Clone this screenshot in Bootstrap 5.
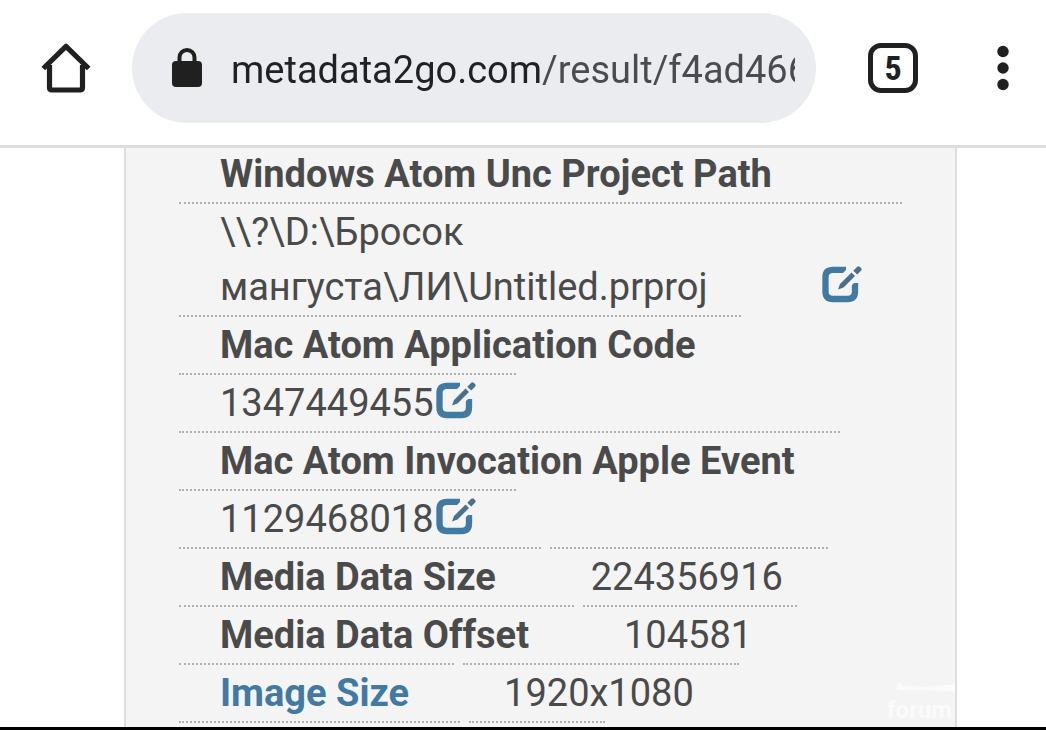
<!DOCTYPE html>
<html lang="en">
<head>
<meta charset="utf-8">
<meta name="viewport" content="width=device-width, initial-scale=1">
<title>Metadata result</title>
<link href="https://cdn.jsdelivr.net/npm/bootstrap@5.3.0/dist/css/bootstrap.min.css" rel="stylesheet">
<style>
  body { font-family: Roboto, "Liberation Sans", sans-serif; font-size: 38px; color: #4a4a4a; }
  .browser-bar { padding: 13px 32px 22px 41px; border-bottom: 3px solid #dedede; z-index: 2; }
  .browser-bar svg { display: block; }
  .address { height: 110px; background: #ebecf0; margin: 0 52px 0 41px; padding: 0 21px 0 39px; gap: 28px; }
  .address input {
    border: 0; outline: 0; padding: 4px 0 0; height: 60px; min-width: 0;
    color: transparent; background: linear-gradient(90deg, #202124 309px, #494b50 309px);
    -webkit-background-clip: text; background-clip: text;
  }
  .tab-count {
    width: 50px; height: 50px; border: 5px solid #202020; border-radius: 13px; color: #202020;
    font: bold 34px/40px "Liberation Sans Narrow", "Roboto Condensed", Roboto, sans-serif;
    margin-right: 74px;
  }
  .panel { margin: -4px 89px 0 124px; padding-left: 53px; background: #f4f4f4; border: 2px solid #dedede; border-width: 0 2px; }
  .entry { gap: 9px; }
  .cell { border-top: 2px dotted #b0b0b0; padding: 1px 45px 0 41px; line-height: 55px; min-height: 58px; }
  .path-cell { width: 723px; padding-right: 40px; }
  .number-cell { padding-right: 40px; gap: 2px; }
  .edit { margin-bottom: 12px; }
  .edit svg { display: block; }
  .next-name { width: 281px; }
  .next-value { width: 136px; }
  .accent { color: #4179a3; }
  .watermark { right: 89px; bottom: 6px; width: 70px; color: #fbfbfb; font-size: 24px; line-height: 28px; }
  .results { min-height: 0; }
  .end-strip { height: 3px; background: #000; }
</style>
</head>
<body class="bg-white">
<div class="d-flex flex-column vh-100 overflow-hidden">
  <header class="browser-bar d-flex align-items-center bg-white position-relative flex-shrink-0">
    <button type="button" class="border-0 bg-transparent p-0" aria-label="Home">
      <svg width="50" height="50" viewBox="0 0 50 50" fill="none" stroke="#202020" stroke-width="5.200" stroke-linejoin="round"><path d="M8.500 22V44.500Q8.500 47 11 47H39Q41.500 47 41.500 44.500V22"/><path d="M2.300 25.500L25 3.300L47.700 25.500"/></svg>
    </button>
    <div class="address rounded-pill d-flex align-items-center flex-grow-1">
      <svg class="flex-shrink-0" width="32" height="40" viewBox="0 0 32 40"><rect x="1" y="13" width="30" height="26" rx="4" fill="#202020"/><path d="M8.500 14V9.500a7.500 7.500 0 0 1 15 0V14" fill="none" stroke="#202020" stroke-width="4"/></svg>
      <input class="flex-grow-1" type="text" aria-label="Address" value="metadata2go.com/result/f4ad466">
    </div>
    <button type="button" class="tab-count bg-transparent p-0" aria-label="5 open tabs">5</button>
    <button type="button" class="border-0 bg-transparent p-0" aria-label="Menu">
      <svg width="22" height="48" viewBox="0 0 22 48" fill="#202020"><circle cx="11" cy="7.500" r="5.700"/><circle cx="11" cy="24" r="5.700"/><circle cx="11" cy="40.500" r="5.700"/></svg>
    </button>
  </header>

  <svg class="d-none">
    <symbol id="pencil" viewBox="0 0 40 38">
      <path d="M24 4.800H11Q3.500 4.800 3.500 12V26.500Q3.500 34 11 34H25.500Q33 34 33 26.500V18" fill="none" stroke="#4179a3" stroke-width="6.300"/>
      <path d="M31 -2L11 18V27H23L42 8V-2Z" fill="#f4f4f4"/>
      <path d="M16 24.500L18 19L29.500 7.500L33 11L21.500 22.500ZM31.300 5.700L35 2Q36.300 .5 38 2L39 3Q40.300 4.300 39 5.700L35.200 9.500Z" fill="#47718f"/>
    </symbol>
  </svg>

  <main class="results flex-grow-1 d-flex flex-column">
    <div class="panel flex-grow-1 overflow-hidden">
      <div class="entry d-flex"><div class="cell fw-bold">Windows Atom Unc Project Path</div></div>
      <div class="entry d-flex">
        <div class="cell path-cell d-flex justify-content-between align-items-end">
          <span>\\?\D:\Бросок<br>мангуста\ЛИ\Untitled.prproj</span>
          <button type="button" class="edit border-0 bg-transparent p-0" aria-label="Edit project path"><svg width="40" height="38"><use href="#pencil"/></svg></button>
        </div>
      </div>
      <div class="entry d-flex"><div class="cell fw-bold">Mac Atom Application Code</div></div>
      <div class="entry d-flex">
        <div class="cell number-cell d-flex align-items-end"><span>1347449455</span>
          <button type="button" class="edit border-0 bg-transparent p-0" aria-label="Edit application code"><svg width="40" height="38"><use href="#pencil"/></svg></button>
        </div>
      </div>
      <div class="entry d-flex"><div class="cell fw-bold">Mac Atom Invocation Apple Event</div></div>
      <div class="entry d-flex">
        <div class="cell number-cell d-flex align-items-end"><span>1129468018</span>
          <button type="button" class="edit border-0 bg-transparent p-0" aria-label="Edit invocation event"><svg width="40" height="38"><use href="#pencil"/></svg></button>
        </div>
      </div>
      <div class="entry d-flex"><div class="cell fw-bold">Media Data Size</div><div class="cell">224356916</div></div>
      <div class="entry d-flex"><div class="cell fw-bold">Media Data Offset</div><div class="cell">104581</div></div>
      <div class="entry d-flex"><div class="cell fw-bold"><a href="#" class="accent text-decoration-none">Image Size</a></div><div class="cell">1920x1080</div></div>
      <div class="entry d-flex"><div class="cell next-name"></div><div class="cell next-value"></div></div>
    </div>
  </main>
  <div class="watermark position-absolute fw-bold">
    <svg class="d-block" width="70" height="14" viewBox="0 0 70 14"><path d="M10 3L13 0L16 4L40 5L68 2V10L40 8H10Z" fill="#fbfbfb"/></svg>
    forum
  </div>
  <div class="end-strip flex-shrink-0"></div>
</div>
<script src="https://cdn.jsdelivr.net/npm/bootstrap@5.3.0/dist/js/bootstrap.bundle.min.js"></script>
</body>
</html>
